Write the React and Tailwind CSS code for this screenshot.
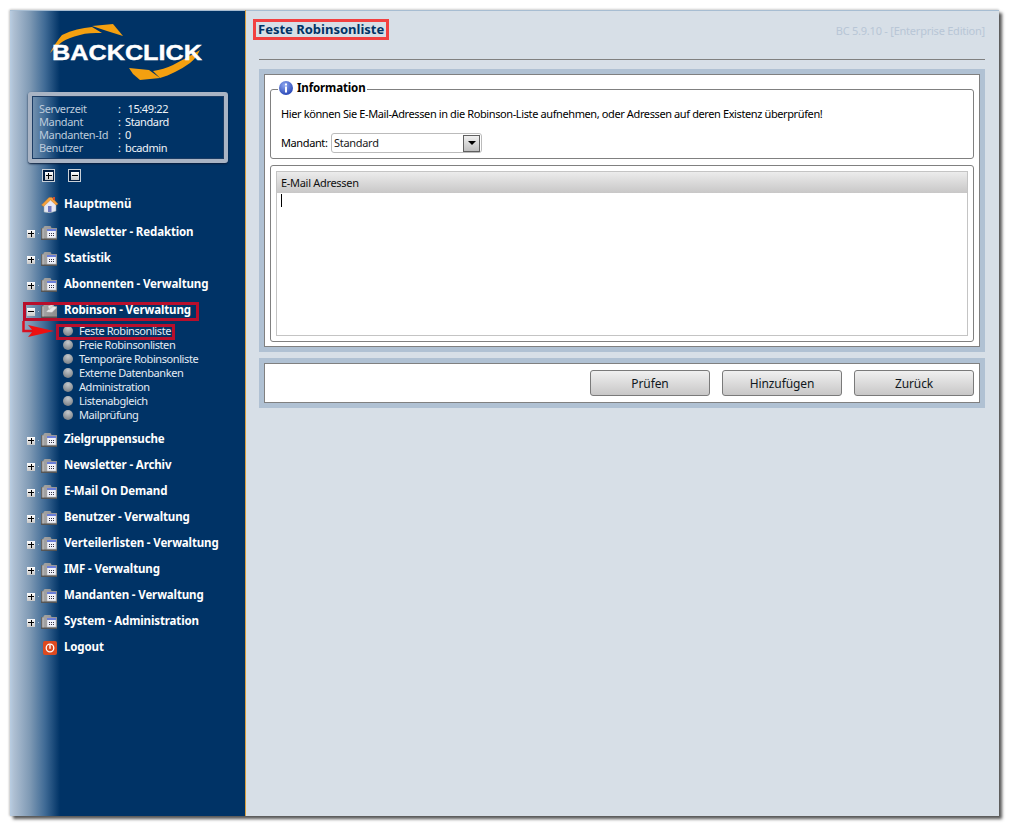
const font = { fontFamily: '"Noto Sans", sans-serif' };

function Expander({ minus }) {
  return (
    <span className="relative flex h-[8px] w-[8px] items-center justify-center bg-gradient-to-b from-white to-[#c8c8c8]">
      <span className="absolute h-[1px] w-[6px] bg-black" />
      {!minus && <span className="absolute h-[6px] w-[1px] bg-black" />}
    </span>
  );
}

function Folder({ open }) {
  return (
    <svg width="16" height="14" viewBox="0 0 16 14">
      <defs>
        <linearGradient id="fold" x1="0" x2="1" y1="0" y2="0">
          <stop offset="0" stopColor="#5a5a5a" />
          <stop offset="0.2" stopColor="#a2a2a2" />
          <stop offset="1" stopColor="#8c8c8c" />
        </linearGradient>
      </defs>
      <path d="M0 2 L2 2 L3 0.5 Q3.5 0 4 0 L9 0 Q10 0 10 1 L10.5 2 L16 2 L16 14 L0 14 Z" fill="url(#fold)" />
      <rect x="0" y="12.5" width="16" height="1.5" fill="#555" />
      <rect x="1.5" y="2.5" width="1" height="10" fill="#d0d0d0" />
      {open ? (
        <path d="M5 8 L11 1.5 L16 3.5 L11 8.5 Z M7 2 L11 0.5 L13 1.5 L8 6 Z" fill="#e8e8e8" stroke="#999" strokeWidth="0.4" />
      ) : (
        <>
          <rect x="6" y="3" width="9" height="9" fill="#f0f2fa" stroke="#aaa" strokeWidth="0.5" />
          <rect x="6" y="3" width="9" height="2" fill="#6a7ed8" />
          <path d="M8 7h1v1H8zM10 7h1v1h-1zM12 7h1v1h-1zM8 9h1v1H8zM10 9h1v1h-1zM12 9h1v1h-1z" fill="#334" />
        </>
      )}
    </svg>
  );
}

function House() {
  return (
    <svg width="18" height="18" viewBox="0 0 18 18">
      <path d="M3 9 L3 16 Q9 18 15 15 L15 8 L9 3 Z" fill="#e6e8f4" stroke="#9aa" strokeWidth="0.5" />
      <rect x="7" y="10" width="3.5" height="6" fill="#7078c0" />
      <path d="M0.5 9 L8 1.5 L11 1.5 L17 8 L15 9 L9.5 4 L2.5 10.5 Z" fill="#f5a23c" stroke="#d07a20" strokeWidth="0.4" />
      <rect x="12" y="1" width="2" height="3" fill="#d0502c" />
    </svg>
  );
}

function Power() {
  return (
    <svg width="14" height="14" viewBox="0 0 14 14">
      <rect width="14" height="14" rx="2" fill="#dd4a20" />
      <circle cx="7" cy="7" r="3.8" fill="none" stroke="#fff" strokeWidth="1.3" />
      <rect x="6.3" y="3.8" width="1.4" height="4" fill="#fff" />
    </svg>
  );
}

const boldText = 'pb-[2px] text-[11.5px] font-bold tracking-[-0.13px] text-white';

function Row({ label, open }) {
  return (
    <div className="flex h-[26px] items-center">
      <span className="ml-[17px] flex w-[14px] items-center pt-px">
        <Expander minus={open} />
        <span className="ml-[3px] h-px w-px bg-[#a8bcd0]" />
      </span>
      <span className="flex w-[22px] justify-start">
        <Folder open={open} />
      </span>
      <span className={`ml-[1px] ${boldText}`}>{label}</span>
    </div>
  );
}

function Sub({ label }) {
  return (
    <div className="flex h-[14px] items-center pb-[2px]">
      <span className="ml-[53px] h-[10px] w-[10px] rounded-full bg-[radial-gradient(circle_at_50%_25%,#c4c8cc,#6c7278)]" />
      <span className="ml-[6px] text-[11px] tracking-[-0.42px] text-[#e4ecf4]">{label}</span>
    </div>
  );
}

function Logo() {
  return (
    <svg width="235" height="72" viewBox="10 11 235 72" className="block">
      <path d="M50 53 C54 45 58 40 62 35 C72 30 82 28 92 27 L102 33 C94 33 86 33 80 35 C72 37 66 39 62 42 C58 45 55 48 53 50 Z" fill="#f4a010" />
      <path d="M92 26 L113 24 L123 36 L107 31 Z" fill="#f4a010" />
      <path d="M129 68 L149 70 L160 78 L140 80 L133 74 Z" fill="#f4a010" />
      <path d="M153 71 C160 70 167 68 173 65 C182 60 192 55 200 50 C197 56 194 60 190 63 C180 70 170 75 160 78 Z" fill="#f4a010" />
      <text x="52" y="60" fontFamily="'Liberation Sans', sans-serif" fontWeight="700" fontSize="22" fill="#fff" stroke="#fff" strokeWidth="0.4" textLength="150" lengthAdjust="spacingAndGlyphs">BACKCLICK</text>
    </svg>
  );
}

function Info() {
  const rows = [
    ['Serverzeit', ':', '\u00a015:49:22'],
    ['Mandant', ':', 'Standard'],
    ['Mandanten-Id', ':', '0'],
    ['Benutzer', ':', 'bcadmin'],
  ];
  return (
    <div className="mt-[9px] ml-[18px] h-[71px] w-[200px] rounded-[3px] border-[4px] border-[#a9b4c4] shadow-[inset_0_0_0_1px_#1c3c64,0_1px_2px_#0a1c38] pl-[7px] pt-[6px]">
      {rows.map(([a, b, c]) => (
        <div key={a} className="flex h-[13px] items-center text-[11px] tracking-[-0.38px] leading-[13px]">
          <span className="w-[79px] text-[#bccadb]">{a}</span>
          <span className="w-[7px] text-[#f0f4f8]">{b}</span>
          <span className="text-[#f0f4f8]">{c}</span>
        </div>
      ))}
    </div>
  );
}

function Button({ children }) {
  return (
    <button className="h-[26px] w-[120px] rounded-[3px] border border-[#7a7a7a] bg-gradient-to-b from-[#f0f0f0] to-[#c8c7c7] pt-[2px] text-[12px] tracking-[-0.1px] text-[#101820]">
      {children}
    </button>
  );
}

export default function App() {
  const before = ['Newsletter - Redaktion', 'Statistik', 'Abonnenten - Verwaltung'];
  const subs = ['Feste Robinsonliste', 'Freie Robinsonlisten', 'Temporäre Robinsonliste', 'Externe Datenbanken', 'Administration', 'Listenabgleich', 'Mailprüfung'];
  const after = ['Zielgruppensuche', 'Newsletter - Archiv', 'E-Mail On Demand', 'Benutzer - Verwaltung', 'Verteilerlisten - Verwaltung', 'IMF - Verwaltung', 'Mandanten - Verwaltung', 'System - Administration'];

  return (
    <div style={font} className="h-[827px] w-[1010px] overflow-hidden bg-white pl-[10px] pt-[10px]">
      <div className="relative flex h-[806px] w-[989px] shadow-[3px_3px_3px_#555,-1px_0_2px_#ccc,0_-1px_2px_#ddd]">
        {/* Sidebar */}
        <aside className="relative w-[236px] shrink-0 border-r border-r-[#d8a040] bg-[linear-gradient(90deg,#b8cde2_0px,#aebfd2_4px,#7e99b4_20px,#3f6a95_35px,#003366_50px)]">
          <div className="h-px bg-[#a7bdd2]" />
          <Logo />
          <Info />
          <div className="flex h-[28px] items-center pb-[3px] pl-[32px]">
            <span className="flex h-[13px] w-[13px] items-center justify-center border border-[#c8d0d8] bg-[#001c40]"><Expander /></span>
            <span className="ml-[13px] flex h-[13px] w-[13px] items-center justify-center border border-[#c8d0d8] bg-[#001c40]"><Expander minus /></span>
          </div>
          <div className="flex h-[28px] items-center pl-[31px]">
            <span className="w-[23px]"><House /></span>
            <span className={boldText}>Hauptmenü</span>
          </div>
          <div className="mt-px">
            {before.map((l) => <Row key={l} label={l} />)}
            <Row label="Robinson - Verwaltung" open />
            <div className="mt-px mb-[4px]">
              {subs.map((l) => <Sub key={l} label={l} />)}
            </div>
            {after.map((l) => <Row key={l} label={l} />)}
            <div className="flex h-[26px] items-center pl-[33px]">
              <span className="w-[21px]"><Power /></span>
              <span className={boldText}>Logout</span>
            </div>
          </div>

          {/* red annotations */}
          <div className="absolute left-[13px] top-[292px] h-[19px] w-[176px] border-[3px] border-[#b80f2c]" />
          <div className="absolute left-[46px] top-[314px] h-[16px] w-[119px] border-[3px] border-[#b80f2c]" />
          <svg className="absolute left-[12px] top-[310px]" width="34" height="18" viewBox="0 0 34 18">
            <path d="M1.5 1 V11 H22" fill="none" stroke="#d81020" strokeWidth="2.5" />
            <path d="M6 5 L32 11 L6 17 L11 11 Z" fill="#ee1111" />
          </svg>
        </aside>

        {/* Main */}
        <main className="flex-1 border-t border-t-[#a7bdd2] bg-[#d7dfe7] pl-[13px] pr-[14px]">
          <div className="relative h-[49px] border-b border-b-[#808080]">
            <h1 className="absolute left-[-6px] top-[8px] border-[3px] border-[#f24040] px-[2px] text-[13px] leading-[15px] font-bold whitespace-nowrap text-[#003366]">
              Feste Robinsonliste
            </h1>
            <span className="absolute right-0 top-[12px] text-[11px] tracking-[-0.23px] text-[#b8c6d6]">BC 5.9.10 - [Enterprise Edition]</span>
          </div>

          <section className="mt-[9px] h-[283px] bg-[#b0c1d3] p-[5px]">
            <div className="h-full border border-[#808080] bg-white px-[5px]">
              <fieldset className="mt-[5px] h-[79px] rounded-[3px] border border-[#808080] pl-[10px] pr-[10px]">
                <legend className="ml-[-3px] flex items-center px-[1px] pb-[4px] text-[11.5px] font-bold leading-[15px] tracking-[-0.13px] text-black">
                  <svg width="14" height="14" viewBox="0 0 14 14" className="mr-[4px]">
                    <defs>
                      <radialGradient id="inf" cx="0.4" cy="0.3" r="0.8">
                        <stop offset="0" stopColor="#8fa8f0" />
                        <stop offset="1" stopColor="#1c3cb0" />
                      </radialGradient>
                    </defs>
                    <circle cx="7" cy="7" r="7" fill="url(#inf)" />
                    <rect x="6" y="2.5" width="2" height="2" fill="#fff" />
                    <rect x="6" y="5.5" width="2" height="6" fill="#fff" />
                  </svg>
                  Information
                </legend>
                <p className="mt-[8px] h-[14px] text-[11px] leading-[14px] tracking-[-0.39px] whitespace-nowrap text-black">
                  Hier können Sie E-Mail-Adressen in die Robinson-Liste aufnehmen, oder Adressen auf deren Existenz überprüfen!
                </p>
                <div className="mt-[12px] flex items-center">
                  <span className="w-[50px] text-[11px] tracking-[-0.39px] text-black">Mandant:</span>
                  <div className="flex h-[20px] w-[151px] items-center justify-between rounded-[3px] border border-[#bbbbbb] pl-[2px] pr-px">
                    <span className="text-[11px] tracking-[-0.3px] text-[#202020]">Standard</span>
                    <span className="flex h-[17px] w-[17px] items-center justify-center border border-[#606060] bg-gradient-to-b from-[#f0f0f0] to-[#c0c0c0]">
                      <span className="h-0 w-0 border-x-[4px] border-t-[4px] border-x-transparent border-t-black" />
                    </span>
                  </div>
                </div>
              </fieldset>
              <div className="mt-[6px] h-[177px] rounded-[3px] border border-[#808080] p-[5px]">
                <div className="h-full border border-[#c4c4c4]">
                  <div className="flex h-[21px] items-center bg-gradient-to-b from-[#ececec] to-[#c8c7c7] pl-[4px] pt-[2px] text-[11px] tracking-[-0.3px] text-[#101010]">
                    E-Mail Adressen
                  </div>
                  <div className="ml-[4px] mt-px h-[13px] w-px bg-black" />
                </div>
              </div>
            </div>
          </section>

          <section className="mt-[6px] h-[50px] bg-[#b0c1d3] p-[5px]">
            <div className="flex h-full items-center justify-end gap-[12px] border border-[#808080] bg-white pr-[5px]">
              <Button>Prüfen</Button>
              <Button>Hinzufügen</Button>
              <Button>Zurück</Button>
            </div>
          </section>
        </main>
      </div>
    </div>
  );
}
